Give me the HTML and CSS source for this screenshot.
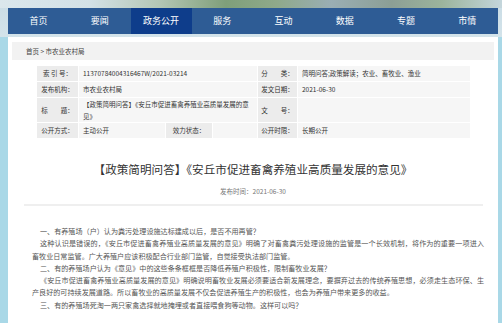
FILE: index.html
```html
<!DOCTYPE html>
<html lang="zh-CN">
<head>
<meta charset="utf-8">
<title>【政策简明问答】《安丘市促进畜禽养殖业高质量发展的意见》</title>
<link rel="stylesheet" href="styles.css">
</head>
<body>
<header class="top">
  <nav class="nav">
    <a class="nav-item">首页</a>
    <a class="nav-item">要闻</a>
    <a class="nav-item active">政务公开</a>
    <a class="nav-item">服务</a>
    <a class="nav-item">互动</a>
    <a class="nav-item">数据</a>
    <a class="nav-item">专题</a>
    <a class="nav-item">市情</a>
  </nav>
</header>
<main class="panel">
  <div class="crumb">首页 &gt; 市农业农村局</div>
  <table class="meta">
    <colgroup>
      <col class="c1"><col class="c2"><col class="c3"><col class="c4"><col class="c5"><col class="c6">
    </colgroup>
    <tr>
      <td class="lab">索 引 号：</td>
      <td class="val" colspan="3">11370784004316467W/2021-03214</td>
      <td class="lab">分　　类：</td>
      <td class="val">简明问答;政策解读；农业、畜牧业、渔业</td>
    </tr>
    <tr>
      <td class="lab">发布机构：</td>
      <td class="val" colspan="3">市农业农村局</td>
      <td class="lab">发文日期：</td>
      <td class="val">2021-06-30</td>
    </tr>
    <tr class="tall">
      <td class="lab">标　　题：</td>
      <td class="val wrap" colspan="3">【政策简明问答】《安丘市促进畜禽养殖业高质量发展的意<br>见》</td>
      <td class="lab">文　　号：</td>
      <td class="val"></td>
    </tr>
    <tr>
      <td class="lab">公开方式：</td>
      <td class="val">主动公开</td>
      <td class="lab">效力状态：</td>
      <td class="val"></td>
      <td class="lab">公开时限：</td>
      <td class="val">长期公开</td>
    </tr>
  </table>
  <h1 class="title">【政策简明问答】《安丘市促进畜禽养殖业高质量发展的意见》</h1>
  <div class="date">发布时间：2021-06-30</div>
  <hr class="sep">
  <article class="body">
    <p><span class="ln first">一、有养殖场（户）认为粪污处理设施达标建成以后，是否不用再管？</span></p>
    <p><span class="ln first full">这种认识是错误的，《安丘市促进畜禽养殖业高质量发展的意见》明确了对畜禽粪污处理设施的监管是一个长效机制，将作为的重要一项进入</span><span class="ln">畜牧业日常监管。广大养殖户应该积极配合行业部门监管，自觉接受执法部门监管。</span></p>
    <p><span class="ln first">二、有的养殖场户认为《意见》中的这些条条框框是否降低养殖户积极性，限制畜牧业发展？</span></p>
    <p><span class="ln first full">《安丘市促进畜禽养殖业高质量发展的意见》明确说明畜牧业发展必须要适合新发展理念，要摒弃过去的传统养殖思想，必须走生态环保、生</span><span class="ln">产良好的可持续发展道路。所以畜牧业的高质量发展不仅会促进养殖生产的积极性，也会为养殖户带来更多的收益。</span></p>
    <p><span class="ln first">三、有的养殖场死淘一两只家禽选择就地掩埋或者直接喂食狗等动物。这样可以吗？</span></p>
  </article>
</main>
</body>
</html>
```
FILE: styles.css
```css
html, body {
  margin: 0;
  padding: 0;
}
body {
  background: #a9d8e7;
  font-family: "Noto Sans CJK SC", "Noto Sans", sans-serif;
  color: #333;
  overflow: hidden;
}
.top {
  height: 37px;
  padding-top: 8px;
  box-sizing: border-box;
  background:
    linear-gradient(90deg, #dbe7ec 0%, #d3e1e6 18%, #b3c6b4 32%, #7f9f7a 45%, #8fa98a 55%, #9aaeb4 66%, #8c9f95 78%, #9cb49c 88%, #c4d6dc 100%) top left / 100% 8px no-repeat,
    linear-gradient(180deg, #c9dce5 0%, #d3e3ea 100%);
}
.nav {
  display: flex;
  margin-left: 8px;
  width: 490px;
  height: 26px;
  background: #2e5c95;
}
.nav-item {
  flex: 1;
  text-align: center;
  color: #fff;
  font-size: 9px;
  line-height: 26px;
}
.nav-item.active {
  background: #0e3d8b;
}
.panel {
  margin-left: 8px;
  width: 490px;
  background: #fff;
  padding: 5px 4px 40px;
  box-sizing: border-box;
}
.crumb {
  height: 18px;
  line-height: 18px;
  background: #f2f2f2;
  padding-left: 14px;
  font-size: 6.5px;
  color: #444;
}
.meta {
  margin: 5px 0 0 24px;
  width: 434px;
  border-collapse: collapse;
  table-layout: fixed;
  font-size: 6.5px;
  color: #333;
}
.c1 { width: 42px; }
.c2 { width: 87px; }
.c3 { width: 47px; }
.c4 { width: 45px; }
.c5 { width: 40px; }
.c6 { width: 173px; }
.meta td {
  border: 1px solid #fff;
  padding: 2px 0;
  line-height: 11px;
  height: 11px;
  white-space: nowrap;
}
.meta .lab {
  background: #ececec;
  text-align: center;
}
.meta .val {
  background: #f6f6f6;
  padding-left: 4px;
}
.meta .tall td {
  line-height: 12px;
  padding-top: 0;
  padding-bottom: 0;
  height: 24px;
}
.title {
  margin: 22px 0 0;
  font-size: 11.6px;
  line-height: 16px;
  font-weight: normal;
  text-align: center;
  color: #333;
}
.date {
  margin-top: 9px;
  font-size: 6.5px;
  line-height: 10px;
  text-align: center;
  color: #777;
}
.sep {
  margin: 8px 0 0 12px;
  width: 459px;
  height: 2px;
  border: 0;
  background: #efefef;
}
.body {
  margin: 19px 0 0 20px;
  width: 452px;
  font-size: 7.1px;
  line-height: 12.3px;
  color: #555;
}
.body p {
  margin: 0;
}
.ln {
  display: block;
  white-space: nowrap;
}
.ln.first {
  padding-left: 8px;
}
.ln.full {
  text-align: justify;
  text-align-last: justify;
}
```
